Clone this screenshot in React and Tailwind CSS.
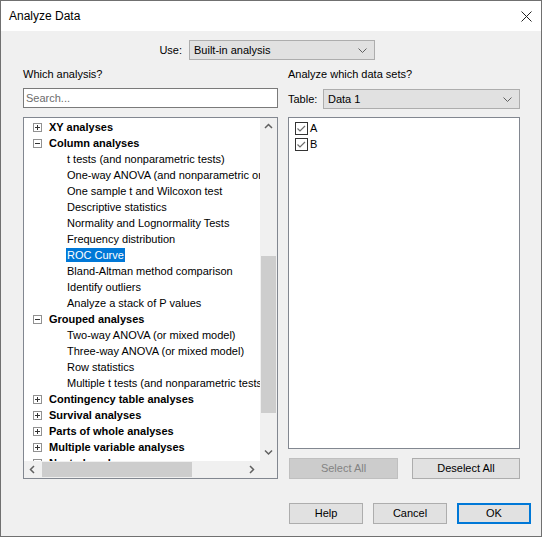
import React from "react";

/* ── tree data ── */
const TREE = [
  { label: "XY analyses", open: false },
  {
    label: "Column analyses",
    open: true,
    children: [
      "t tests (and nonparametric tests)",
      "One-way ANOVA (and nonparametric or mixed)",
      "One sample t and Wilcoxon test",
      "Descriptive statistics",
      "Normality and Lognormality Tests",
      "Frequency distribution",
      "ROC Curve",
      "Bland-Altman method comparison",
      "Identify outliers",
      "Analyze a stack of P values",
    ],
  },
  {
    label: "Grouped analyses",
    open: true,
    children: [
      "Two-way ANOVA (or mixed model)",
      "Three-way ANOVA (or mixed model)",
      "Row statistics",
      "Multiple t tests (and nonparametric tests)",
    ],
  },
  { label: "Contingency table analyses", open: false },
  { label: "Survival analyses", open: false },
  { label: "Parts of whole analyses", open: false },
  { label: "Multiple variable analyses", open: false },
  { label: "Nested analyses", open: false },
];

const SELECTED = "ROC Curve";

function Expander({ open }) {
  return (
    <svg width="9" height="9" className="shrink-0">
      <rect x="0.5" y="0.5" width="8" height="8" fill="white" stroke="#919191" />
      <path d="M2 4.5h5" stroke="#333" />
      {!open && <path d="M4.5 2v5" stroke="#333" />}
    </svg>
  );
}

function Chevron({ dir = "down" }) {
  const d = {
    down: "M1 1.5l3.5 3.5 3.5-3.5",
    up: "M1 5l3.5-3.5 3.5 3.5",
    left: "M5 1l-3.5 3.5 3.5 3.5",
    right: "M2 1l3.5 3.5-3.5 3.5",
  }[dir];
  const vertical = dir === "left" || dir === "right";
  return (
    <svg width={vertical ? 7 : 9} height={vertical ? 9 : 7} className="shrink-0">
      <path d={d} fill="none" stroke="#606060" strokeWidth="1.5" />
    </svg>
  );
}

function Dropdown({ value, className = "" }) {
  return (
    <div
      className={`h-[20px] flex items-center justify-between bg-[#e1e1e1] border border-[#adadad] pl-[4px] pr-[7px] ${className}`}
    >
      <span>{value}</span>
      <svg width="9" height="5">
        <path d="M0.5 0.5l4 4 4-4" fill="none" stroke="#606060" />
      </svg>
    </div>
  );
}

function Button({ children, disabled, primary, className = "" }) {
  const look = disabled
    ? "bg-[#cccccc] border-[#bfbfbf] text-[#838383]"
    : primary
    ? "bg-[#e1e1e1] border-[#0078d7] border-2 text-black"
    : "bg-[#e1e1e1] border-[#adadad] text-black";
  return (
    <div className={`h-[21px] flex items-center justify-center border ${look} ${className}`}>
      {children}
    </div>
  );
}

function Check({ label }) {
  return (
    <div className="h-[16px] flex items-center">
      <svg width="13" height="13" className="shrink-0">
        <rect x="0.5" y="0.5" width="12" height="12" fill="white" stroke="#333" />
        <path d="M2.5 6.5l2.5 2.5 5-5" fill="none" stroke="#6d6d6d" strokeWidth="1.2" />
      </svg>
      <span className="ml-[2px] leading-none">{label}</span>
    </div>
  );
}

function AnalysisTree() {
  return (
    <div className="w-[255px] h-[362px] border border-[#828790] bg-white flex flex-col">
      <div className="flex h-[343px]">
        {/* rows */}
        <div className="w-[236px] overflow-hidden pt-[1px]">
          {TREE.map((g) => (
            <div key={g.label}>
              <div className="h-[16px] flex items-center pl-[9px] whitespace-nowrap">
                <Expander open={g.open} />
                <span className="ml-[7px] font-bold">{g.label}</span>
              </div>
              {g.open &&
                g.children.map((c) => (
                  <div key={c} className="h-[16px] flex items-center pl-[42px] whitespace-nowrap">
                    <span
                      className={
                        c === SELECTED
                          ? "bg-[#0078d7] text-white px-[1px] leading-[14px]"
                          : "px-[1px] leading-[14px]"
                      }
                    >
                      {c}
                    </span>
                  </div>
                ))}
            </div>
          ))}
        </div>
        {/* vertical scrollbar */}
        <div className="w-[17px] bg-[#f0f0f0] flex flex-col">
          <div className="h-[17px] flex items-center justify-center">
            <Chevron dir="up" />
          </div>
          <div className="h-[121px]" />
          <div className="h-[157px] w-[15px] ml-[1px] bg-[#cdcdcd]" />
          <div className="flex-1" />
          <div className="h-[17px] flex items-center justify-center">
            <Chevron dir="down" />
          </div>
        </div>
      </div>
      {/* horizontal scrollbar */}
      <div className="flex h-[17px] bg-[#f0f0f0]">
        <div className="w-[236px] flex items-center">
          <div className="w-[17px] flex justify-center">
            <Chevron dir="left" />
          </div>
          <div className="w-[150px] h-[15px] ml-[1px] bg-[#cdcdcd]" />
          <div className="flex-1" />
          <div className="w-[17px] flex justify-center">
            <Chevron dir="right" />
          </div>
        </div>
        <div className="w-[17px]" />
      </div>
    </div>
  );
}

export default function App() {
  return (
    <div className="w-[542px] h-[537px] border border-[#707070] bg-[#f0f0f0] flex flex-col text-[11px] text-black font-['Liberation_Sans',Arial,sans-serif]">
      {/* title bar */}
      <div className="h-[30px] bg-white flex items-center justify-between pl-[8px] pr-[9px] shrink-0">
        <span className="text-[12px]">Analyze Data</span>
        <svg width="11" height="11">
          <path d="M0.5 0.5l10 10M10.5 0.5l-10 10" stroke="#222" strokeWidth="1" />
        </svg>
      </div>

      {/* use row */}
      <div className="mt-[9px] flex items-center h-[20px]">
        <div className="w-[188px] text-right pr-[7px]">Use:</div>
        <Dropdown value="Built-in analysis" className="w-[186px]" />
      </div>

      {/* columns */}
      <div className="mt-[7px] flex pl-[22px] gap-[10px]">
        <div className="w-[255px] flex flex-col">
          <div className="h-[14px] leading-[14px]">Which analysis?</div>
          <div className="mt-[7px] h-[20px] bg-white border border-[#7a7a7a] flex items-center pl-[2px] text-[#6d6d6d]">
            Search...
          </div>
          <div className="mt-[9px]">
            <AnalysisTree />
          </div>
        </div>

        <div className="w-[232px] flex flex-col">
          <div className="h-[14px] leading-[14px]">Analyze which data sets?</div>
          <div className="mt-[8px] flex items-center h-[20px]">
            <span className="w-[35px]">Table:</span>
            <Dropdown value="Data 1" className="w-[197px]" />
          </div>
          <div className="mt-[8px] h-[332px] bg-white border border-[#828790] pl-[6px] pt-[2px]">
            <Check label="A" />
            <Check label="B" />
          </div>
          <div className="mt-[9px] flex justify-between">
            <Button disabled className="w-[109px] ml-[1px]">Select All</Button>
            <Button className="w-[108px]">Deselect All</Button>
          </div>
        </div>
      </div>

      {/* footer buttons */}
      <div className="mt-[24px] flex justify-end gap-[10px] pr-[10px]">
        <Button className="w-[74px]">Help</Button>
        <Button className="w-[74px]">Cancel</Button>
        <Button primary className="w-[74px]">OK</Button>
      </div>
    </div>
  );
}
